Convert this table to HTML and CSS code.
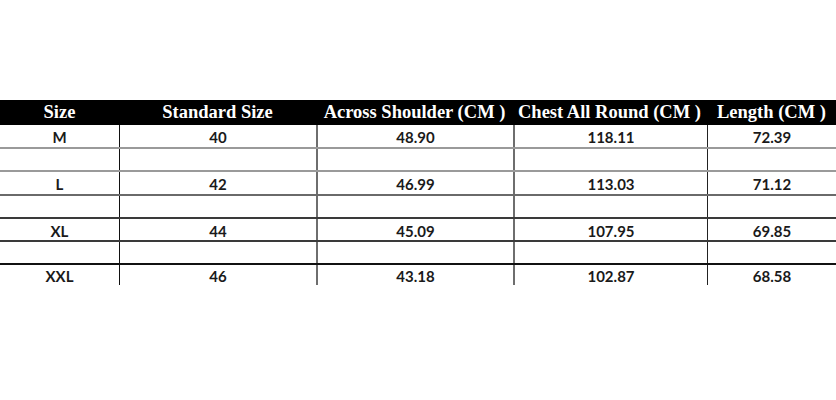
FILE: index.html
```html
<!DOCTYPE html>
<html>
<head>
<meta charset="utf-8">
<link rel="stylesheet" href="styles.css">
</head>
<body>
<div class="sheet">
  <div class="row head">
    <div class="cell">Size</div>
    <div class="cell">Standard Size</div>
    <div class="cell">Across Shoulder (CM )</div>
    <div class="cell">Chest All Round (CM )</div>
    <div class="cell">Length (CM )</div>
  </div>
  <div class="row first">
    <div class="cell">M</div><div class="cell">40</div><div class="cell">48.90</div><div class="cell">118.11</div><div class="cell">72.39</div>
  </div>
  <div class="row gap light">
    <div class="cell"></div><div class="cell"></div><div class="cell"></div><div class="cell"></div><div class="cell"></div>
  </div>
  <div class="row light">
    <div class="cell">L</div><div class="cell">42</div><div class="cell">46.99</div><div class="cell">113.03</div><div class="cell">71.12</div>
  </div>
  <div class="row gap mid">
    <div class="cell"></div><div class="cell"></div><div class="cell"></div><div class="cell"></div><div class="cell"></div>
  </div>
  <div class="row dark">
    <div class="cell">XL</div><div class="cell">44</div><div class="cell">45.09</div><div class="cell">107.95</div><div class="cell">69.85</div>
  </div>
  <div class="row gap dark">
    <div class="cell"></div><div class="cell"></div><div class="cell"></div><div class="cell"></div><div class="cell"></div>
  </div>
  <div class="row black">
    <div class="cell">XXL</div><div class="cell">46</div><div class="cell">43.18</div><div class="cell">102.87</div><div class="cell">68.58</div>
  </div>
</div>
</body>
</html>
```

FILE: styles.css
```css
html, body {
  margin: 0;
  padding: 0;
  background: #ffffff;
}

.sheet {
  margin-top: 100px;
  width: 836px;
}

.row {
  display: grid;
  grid-template-columns: 119px 197px 197px 194px 129px;
  height: 23px;
  box-sizing: border-box;
  font-family: "Lato", "Open Sans", sans-serif;
  font-weight: 700;
  font-size: 15px;
  color: #1a1a1a;
}

.row .cell {
  display: flex;
  align-items: center;
  justify-content: center;
  padding-top: 2px;
  box-sizing: border-box;
  border-left: 2px solid #6e6e6e;
}

.row .cell:first-child {
  border-left: none;
}

.row .cell:nth-child(2) {
  border-left: 1px solid #111111;
}

.row .cell:nth-child(5) {
  border-left: 1px solid #222222;
}

.head {
  height: 25px;
  background: #000000;
  color: #ffffff;
  font-family: "Liberation Serif", "Times New Roman", serif;
  font-size: 18.5px;
  font-weight: 700;
}

.head .cell,
.head .cell:nth-child(2),
.head .cell:nth-child(5) {
  border-left: none;
  padding-top: 0;
}

.head .cell:nth-child(4) {
  justify-content: flex-start;
  padding-left: 5px;
}

.head .cell:nth-child(5) {
  justify-content: flex-start;
  padding-left: 10px;
}

.first {
  height: 22px;
}

.light {
  border-top: 2px solid #9a9a9a;
  height: 24px;
}

.mid {
  border-top: 2px solid #6a6a6a;
}

.dark {
  border-top: 2px solid #3a3a3a;
}

.black {
  border-top: 2px solid #111111;
  height: 22px;
}

.gap {
  height: 23px;
}
```
